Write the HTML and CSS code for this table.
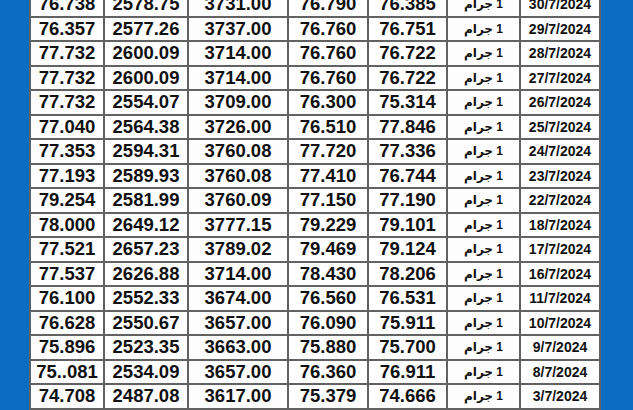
FILE: index.html
```html
<!DOCTYPE html>
<html lang="ar">
<head>
<meta charset="utf-8">
<link rel="stylesheet" href="styles.css">
</head>
<body>
<main class="sheet">
<table class="prices">
<colgroup>
<col class="c1"><col class="c2"><col class="c3"><col class="c4"><col class="c5"><col class="c6"><col class="c7">
</colgroup>
<tbody>
<tr><td>76.738</td><td>2578.75</td><td>3731.00</td><td>76.790</td><td>76.385</td><td class="unit" dir="rtl">1 جرام</td><td class="date">30/7/2024</td></tr>
<tr><td>76.357</td><td>2577.26</td><td>3737.00</td><td>76.760</td><td>76.751</td><td class="unit" dir="rtl">1 جرام</td><td class="date">29/7/2024</td></tr>
<tr><td>77.732</td><td>2600.09</td><td>3714.00</td><td>76.760</td><td>76.722</td><td class="unit" dir="rtl">1 جرام</td><td class="date">28/7/2024</td></tr>
<tr><td>77.732</td><td>2600.09</td><td>3714.00</td><td>76.760</td><td>76.722</td><td class="unit" dir="rtl">1 جرام</td><td class="date">27/7/2024</td></tr>
<tr><td>77.732</td><td>2554.07</td><td>3709.00</td><td>76.300</td><td>75.314</td><td class="unit" dir="rtl">1 جرام</td><td class="date">26/7/2024</td></tr>
<tr><td>77.040</td><td>2564.38</td><td>3726.00</td><td>76.510</td><td>77.846</td><td class="unit" dir="rtl">1 جرام</td><td class="date">25/7/2024</td></tr>
<tr><td>77.353</td><td>2594.31</td><td>3760.08</td><td>77.720</td><td>77.336</td><td class="unit" dir="rtl">1 جرام</td><td class="date">24/7/2024</td></tr>
<tr><td>77.193</td><td>2589.93</td><td>3760.08</td><td>77.410</td><td>76.744</td><td class="unit" dir="rtl">1 جرام</td><td class="date">23/7/2024</td></tr>
<tr><td>79.254</td><td>2581.99</td><td>3760.09</td><td>77.150</td><td>77.190</td><td class="unit" dir="rtl">1 جرام</td><td class="date">22/7/2024</td></tr>
<tr><td>78.000</td><td>2649.12</td><td>3777.15</td><td>79.229</td><td>79.101</td><td class="unit" dir="rtl">1 جرام</td><td class="date">18/7/2024</td></tr>
<tr><td>77.521</td><td>2657.23</td><td>3789.02</td><td>79.469</td><td>79.124</td><td class="unit" dir="rtl">1 جرام</td><td class="date">17/7/2024</td></tr>
<tr><td>77.537</td><td>2626.88</td><td>3714.00</td><td>78.430</td><td>78.206</td><td class="unit" dir="rtl">1 جرام</td><td class="date">16/7/2024</td></tr>
<tr><td>76.100</td><td>2552.33</td><td>3674.00</td><td>76.560</td><td>76.531</td><td class="unit" dir="rtl">1 جرام</td><td class="date">11/7/2024</td></tr>
<tr><td>76.628</td><td>2550.67</td><td>3657.00</td><td>76.090</td><td>75.911</td><td class="unit" dir="rtl">1 جرام</td><td class="date">10/7/2024</td></tr>
<tr><td>75.896</td><td>2523.35</td><td>3663.00</td><td>75.880</td><td>75.700</td><td class="unit" dir="rtl">1 جرام</td><td class="date">9/7/2024</td></tr>
<tr><td>75..081</td><td>2534.09</td><td>3657.00</td><td>76.360</td><td>76.911</td><td class="unit" dir="rtl">1 جرام</td><td class="date">8/7/2024</td></tr>
<tr><td>74.708</td><td>2487.08</td><td>3617.00</td><td>75.379</td><td>74.666</td><td class="unit" dir="rtl">1 جرام</td><td class="date">3/7/2024</td></tr>
<tr><td></td><td></td><td></td><td></td><td></td><td></td><td></td></tr>
</tbody>
</table>
</main>
</body>
</html>
```
FILE: styles.css
```css
html, body {
  margin: 0;
  padding: 0;
}
body {
  background: #0a6cc2;
  width: 633px;
  height: 410px;
  overflow: hidden;
  font-family: "Liberation Sans", Arial, "DejaVu Sans", sans-serif;
}
.sheet {
  margin: -9px 0 0 29px;
  width: 572px;
}
.prices {
  border-collapse: collapse;
  table-layout: fixed;
  width: 572px;
  background: #fdfdfd;
}
.c1 { width: 74px; }
.c2 { width: 84px; }
.c3 { width: 100px; }
.c4 { width: 80px; }
.c5 { width: 79px; }
.c6 { width: 73px; }
.c7 { width: 80px; }
.prices td {
  border: 2px solid #626262;
  height: 22.5px;
  padding: 0;
  text-align: center;
  vertical-align: middle;
  font-weight: bold;
  font-size: 18.5px;
  line-height: 20px;
  color: #111;
  white-space: nowrap;
  overflow: hidden;
}
.prices td.unit {
  font-size: 12px;
  font-family: "Liberation Sans", "DejaVu Sans", sans-serif;
}
.prices td.date {
  font-size: 14px;
}
```
